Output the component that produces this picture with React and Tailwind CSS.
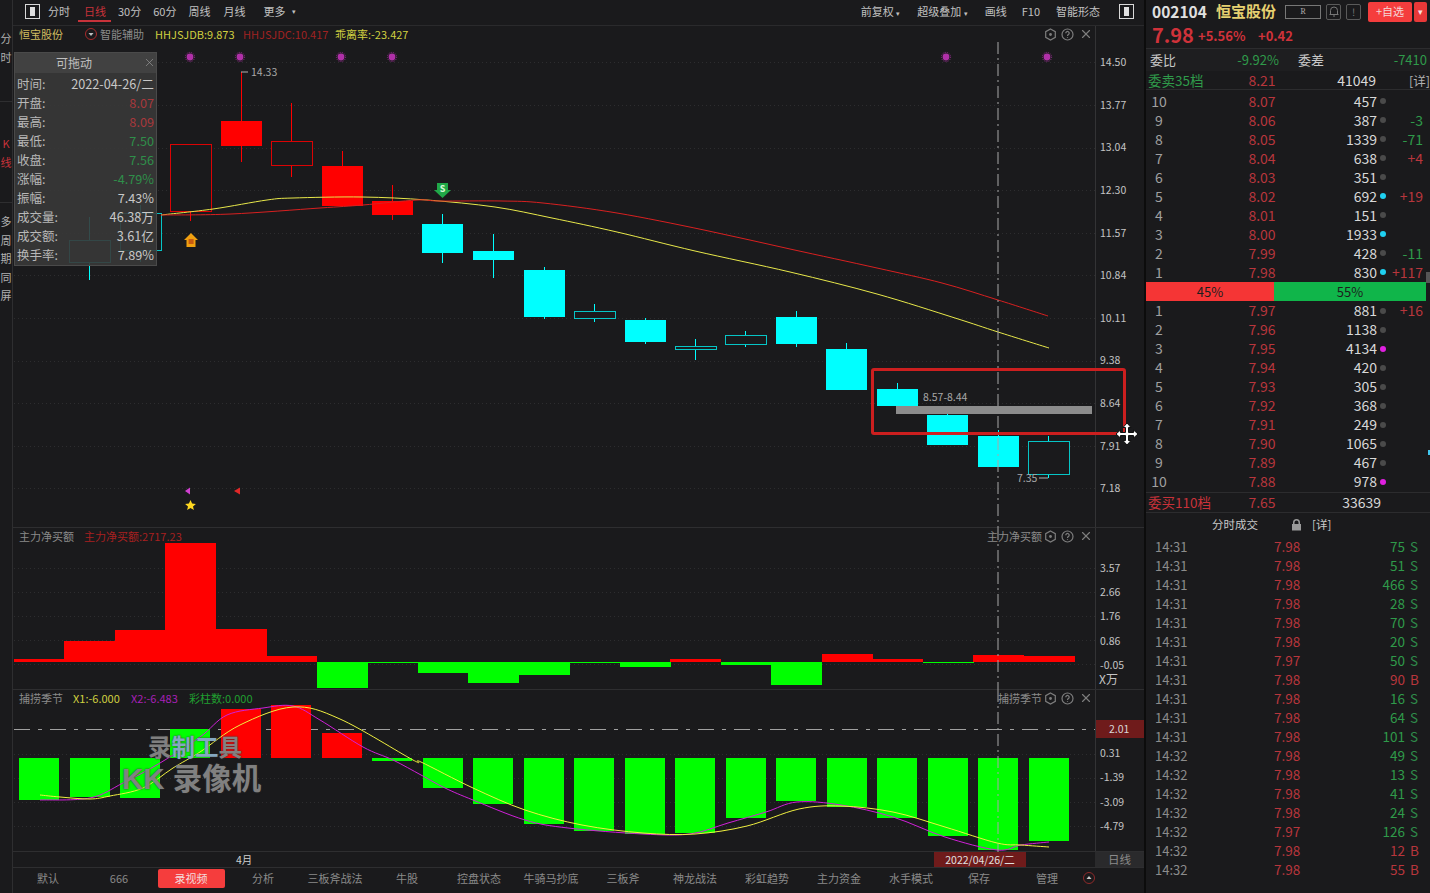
import { X } from 'lucide-react';

const RED = '#ff0000';
const CYAN = '#00ffff';
const GREEN = '#00ff00';

// x, body top, body bottom, wick top, wick bottom
const candles = [
  { x: 89, t: 240, b: 262, wt: 217, wb: 280, c: CYAN, hollow: true },
  { x: 140, t: 213, b: 250, wt: 205, wb: 262, c: CYAN, hollow: true },
  { x: 190, t: 144, b: 211, wt: 144, wb: 221, c: RED, hollow: true },
  { x: 241, t: 121, b: 146, wt: 72, wb: 162, c: RED },
  { x: 291, t: 141, b: 165, wt: 103, wb: 177, c: RED, hollow: true },
  { x: 342, t: 166, b: 206, wt: 151, wb: 206, c: RED },
  { x: 392, t: 201, b: 215, wt: 185, wb: 220, c: RED },
  { x: 442, t: 224, b: 253, wt: 214, wb: 263, c: CYAN },
  { x: 493, t: 251, b: 260, wt: 234, wb: 278, c: CYAN },
  { x: 544, t: 270, b: 317, wt: 267, wb: 319, c: CYAN },
  { x: 594, t: 311, b: 318, wt: 304, wb: 322, c: CYAN, hollow: true },
  { x: 645, t: 320, b: 342, wt: 318, wb: 344, c: CYAN },
  { x: 695, t: 346, b: 349, wt: 339, wb: 360, c: CYAN, hollow: true },
  { x: 745, t: 335, b: 344, wt: 331, wb: 347, c: CYAN, hollow: true },
  { x: 796, t: 317, b: 344, wt: 311, wb: 347, c: CYAN },
  { x: 846, t: 349, b: 390, wt: 343, wb: 390, c: CYAN },
  { x: 897, t: 389, b: 406, wt: 383, wb: 406, c: CYAN },
  { x: 947, t: 415, b: 445, wt: 408, wb: 445, c: CYAN },
  { x: 998, t: 436, b: 467, wt: 430, wb: 467, c: CYAN },
  { x: 1048, t: 441, b: 474, wt: 436, wb: 478, c: CYAN, hollow: true },
];

const yellowMain = [[161, 215], [213, 209], [267, 200], [293, 198], [362, 197], [427, 200], [495, 207], [552, 218], [617, 232], [695, 251], [790, 272], [877, 294], [955, 318], [998, 332], [1049, 348]];
const redMain = [[161, 215], [231, 214], [320, 208], [363, 205], [417, 200], [439, 201], [502, 201], [543, 203], [617, 213], [704, 230], [790, 249], [877, 268], [942, 283], [998, 300], [1048, 316]];

const netBars = [
  [14, 659, 662, RED], [64, 641, 662, RED], [115, 630, 662, RED], [165, 543, 662, RED], [216, 629, 662, RED],
  [266, 656, 662, RED], [317, 662, 688, GREEN], [367, 662, 663, GREEN], [418, 662, 673, GREEN], [468, 662, 683, GREEN],
  [519, 662, 675, GREEN], [569, 662, 663, GREEN], [620, 662, 667, GREEN], [670, 659, 662, RED], [721, 662, 665, GREEN],
  [771, 662, 685, GREEN], [822, 654, 662, RED], [872, 659, 662, RED], [923, 662, 663, GREEN], [973, 655, 662, RED],
  [1024, 656, 662, RED],
];

const colorBars = [
  [19, 758, 800, GREEN], [70, 758, 797, GREEN], [120, 758, 798, GREEN], [170, 729, 758, GREEN], [221, 709, 758, RED],
  [271, 705, 758, RED], [322, 733, 758, RED], [372, 758, 761, GREEN], [423, 758, 788, GREEN], [473, 758, 804, GREEN],
  [524, 758, 824, GREEN], [574, 758, 831, GREEN], [625, 758, 834, GREEN], [675, 758, 833, GREEN], [726, 758, 818, GREEN],
  [776, 758, 801, GREEN], [827, 758, 807, GREEN], [877, 758, 818, GREEN], [928, 758, 836, GREEN], [978, 758, 850, GREEN],
  [1029, 758, 841, GREEN],
];

const yellowLow = [[40, 795], [60, 797], [90, 799], [110, 796], [143, 788], [173, 768], [200, 752], [240, 725], [293, 707], [340, 719], [413, 760], [421, 762], [473, 788], [525, 810], [582, 825], [643, 833], [695, 834], [747, 826], [799, 809], [841, 806], [893, 812], [945, 827], [997, 843], [1021, 845], [1049, 847]];
const magentaLow = [[40, 800], [90, 798], [123, 783], [160, 763], [200, 737], [227, 715], [263, 708], [293, 706], [320, 720], [363, 747], [393, 760], [421, 775], [445, 788], [473, 800], [525, 820], [568, 828], [643, 834], [690, 834], [728, 823], [766, 812], [797, 802], [841, 805], [893, 817], [945, 837], [997, 850], [1021, 845], [1049, 842]];

const asks = [
  ['10', '8.07', '457', 'g', ''], ['9', '8.06', '387', 'g', '-3'], ['8', '8.05', '1339', 'g', '-71'],
  ['7', '8.04', '638', 'g', '+4'], ['6', '8.03', '351', 'g', ''], ['5', '8.02', '692', 'c', '+19'],
  ['4', '8.01', '151', 'g', ''], ['3', '8.00', '1933', 'c', ''], ['2', '7.99', '428', 'g', '-11'],
  ['1', '7.98', '830', 'c', '+117'],
];
const bids = [
  ['1', '7.97', '881', 'g', '+16'], ['2', '7.96', '1138', 'g', ''], ['3', '7.95', '4134', 'm', ''],
  ['4', '7.94', '420', 'g', ''], ['5', '7.93', '305', 'g', ''], ['6', '7.92', '368', 'g', ''],
  ['7', '7.91', '249', 'g', ''], ['8', '7.90', '1065', 'g', ''], ['9', '7.89', '467', 'g', ''],
  ['10', '7.88', '978', 'm', ''],
];
const ticks = [
  ['14:31', '7.98', '75', 'S'], ['14:31', '7.98', '51', 'S'], ['14:31', '7.98', '466', 'S'], ['14:31', '7.98', '28', 'S'],
  ['14:31', '7.98', '70', 'S'], ['14:31', '7.98', '20', 'S'], ['14:31', '7.97', '50', 'S'], ['14:31', '7.98', '90', 'B'],
  ['14:31', '7.98', '16', 'S'], ['14:31', '7.98', '64', 'S'], ['14:31', '7.98', '101', 'S'], ['14:32', '7.98', '49', 'S'],
  ['14:32', '7.98', '13', 'S'], ['14:32', '7.98', '41', 'S'], ['14:32', '7.98', '24', 'S'], ['14:32', '7.97', '126', 'S'],
  ['14:32', '7.98', '12', 'B'], ['14:32', '7.98', '55', 'B'],
];

const popupRows = [
  ['时间:', '2022-04-26/二', 'text-[#c8c8c8]'], ['开盘:', '8.07', 'text-[#a8383c]'], ['最高:', '8.09', 'text-[#a8383c]'],
  ['最低:', '7.50', 'text-[#2f8f4a]'], ['收盘:', '7.56', 'text-[#2f8f4a]'], ['涨幅:', '-4.79%', 'text-[#2f8f4a]'],
  ['振幅:', '7.43%', 'text-[#c8c8c8]'], ['成交量:', '46.38万', 'text-[#c8c8c8]'], ['成交额:', '3.61亿', 'text-[#c8c8c8]'],
  ['换手率:', '7.89%', 'text-[#c8c8c8]'],
];

const tabs = ['默认', '666', '录视频', '分析', '三板斧战法', '牛股', '控盘状态', '牛骑马抄底', '三板斧', '神龙战法', '彩虹趋势', '主力资金', '水手模式'];

const dotColors = { g: 'bg-[#4a4a4a]', c: 'bg-[#1fd0f0]', m: 'bg-[#e020e0]' };

// catmull-rom through the sampled points, so the averages don't look kinked
function smoothPath(pts) {
  let d = `M${pts[0][0]} ${pts[0][1]}`;
  for (let i = 0; i < pts.length - 1; i++) {
    const p0 = pts[i - 1] || pts[i];
    const p1 = pts[i];
    const p2 = pts[i + 1];
    const p3 = pts[i + 2] || p2;
    const c1x = p1[0] + (p2[0] - p0[0]) / 6;
    const c1y = p1[1] + (p2[1] - p0[1]) / 6;
    const c2x = p2[0] - (p3[0] - p1[0]) / 6;
    const c2y = p2[1] - (p3[1] - p1[1]) / 6;
    d += `C${c1x} ${c1y} ${c2x} ${c2y} ${p2[0]} ${p2[1]}`;
  }
  return d;
}

function SplitIcon() {
  return (
    <div className="w-[15px] h-[15px] border border-[#d8d8d8] flex justify-center items-stretch py-[2px]">
      <div className="w-[5px] bg-[#e0e0e0]" />
    </div>
  );
}

function PanelIcons() {
  return (
    <div className="flex items-center gap-[4px] text-[#7d7d7d]">
      <svg width="13" height="13" viewBox="0 0 13 13" fill="none" stroke="currentColor" strokeWidth="1.2">
        <path d="M6.5 1 11.3 3.7v5.6L6.5 12 1.7 9.3V3.7z" />
        <circle cx="6.5" cy="6.5" r="1.4" fill="currentColor" stroke="none" />
      </svg>
      <svg width="13" height="13" viewBox="0 0 13 13" fill="none" stroke="currentColor" strokeWidth="1.2">
        <circle cx="6.5" cy="6.5" r="5.5" />
        <path d="M4.8 5.2a1.7 1.7 0 1 1 2.6 1.4c-.6.4-.9.7-.9 1.3M6.5 9.2v.8" />
      </svg>
      <X size={14} strokeWidth={2} className="ml-[1px]" />
    </div>
  );
}

function PanelHeader({ children, right }) {
  return (
    <div className="absolute left-0 top-0 w-[1082px] h-[16px] pl-[6px] pr-[2px] flex items-center text-[11px] leading-[16px] whitespace-nowrap">
      {children}
      <div className="ml-auto flex items-center gap-[2px]">
        {right && <span className="text-[#8a8a8a] text-[11px]">{right}</span>}
        <PanelIcons />
      </div>
    </div>
  );
}

function AxisLabel({ children, className = 'h-[24.2px]' }) {
  return <div className={`pl-[4px] flex items-center text-[10.5px] text-[#c4c4c4] ${className}`}>{children}</div>;
}

function Grid({ ys, x2 = 1095 }) {
  return ys.map((y) => <line key={y} x1="14" x2={x2} y1={y + 0.5} y2={y + 0.5} stroke="#2d2d2f" strokeDasharray="1 3" />);
}

function Bars({ data, width }) {
  return data.map(([x, t, b, c]) => <rect key={x} x={x} y={t} width={width} height={b - t} fill={c} shapeRendering="crispEdges" />);
}

function CrossLine({ y1, y2 }) {
  return <line x1="998" x2="998" y1={y1} y2={y2} stroke="#a8a8a8" strokeDasharray="12 4 2 4" />;
}

function MainChart() {
  const gridYs = [62, 105, 148, 190, 233, 275, 318, 361, 403, 446, 488];
  return (
    <svg viewBox="13 26 1082 502" className="w-[1082px] h-[502px] block shrink-0">
      <Grid ys={gridYs} />
      {candles.map((k) => (
        <g key={k.x} shapeRendering="crispEdges">
          <line x1={k.x + 0.5} x2={k.x + 0.5} y1={k.wt} y2={k.t} stroke={k.c} />
          <line x1={k.x + 0.5} x2={k.x + 0.5} y1={k.b} y2={k.wb} stroke={k.c} />
          {k.hollow ? (
            <rect x={k.x - 20 + 0.5} y={k.t + 0.5} width="41" height={k.b - k.t} fill="#1a1a1c" stroke={k.c} strokeOpacity={k.c === CYAN ? 0.75 : 0.85} />
          ) : (
            <rect x={k.x - 20} y={k.t} width="41" height={k.b - k.t} fill={k.c} />
          )}
        </g>
      ))}
      <path d={smoothPath(yellowMain)} fill="none" stroke="#e8e84a" />
      <path d={smoothPath(redMain)} fill="none" stroke="#d82020" />
      <CrossLine y1={42} y2={528} />
      {[190, 240, 341, 392, 946, 1047].map((x) => (
        <g key={x}>
          <circle cx={x} cy="57" r="3.4" fill="#b030a8" />
          <circle cx={x} cy="57" r="4.6" fill="none" stroke="#b030a8" strokeWidth="0.8" strokeDasharray="1 1.2" />
        </g>
      ))}
      {/* buy / sell markers */}
      <path d="M191 233l7 7h-2.5v7h-9v-7H184z" fill="#f0a010" />
      <rect x="188.6" y="239" width="5" height="5" fill="#c85a10" />
      <path d="M437 183h11v7l3 0-8.500 8-8.500-8 3 0z" fill="#20a848" />
      <text x="442.500" y="192" textAnchor="middle" fontSize="9" fontWeight="700" fill="#d8f8d8">S</text>
      <path d="M185 491l5-3.500v7z" fill="#d040d0" />
      <path d="M234 491l6-3.500v7z" fill="#e02828" />
      <path d="M190.500 500l1.600 3.500 3.800.4-2.900 2.500.9 3.700-3.400-2-3.400 2 .9-3.700-2.900-2.500 3.800-.4z" fill="#ffd820" />
      {/* price notes */}
      <path d="M241 72h7" stroke="#b0b0b0" />
      <text x="251" y="76" fontSize="10.500" fill="#a8a8a8">14.33</text>
      <text x="923" y="401" fontSize="10.500" fill="#a8a8a8">8.57-8.44</text>
      <text x="1017" y="482" fontSize="10.500" fill="#a8a8a8">7.35</text>
      <path d="M1039 478h9" stroke="#b0b0b0" />
      <rect x="896" y="406" width="196" height="8" fill="#8c8c8c" />
    </svg>
  );
}

function NetChart() {
  return (
    <svg viewBox="13 528 1082 162" className="w-[1082px] h-[162px] block shrink-0">
      <Grid ys={[568, 592, 616, 640, 664]} />
      <Bars data={netBars} width={50.500} />
      <CrossLine y1={528} y2={690} />
    </svg>
  );
}

function LowChart() {
  return (
    <svg viewBox="13 690 1082 162" className="w-[1082px] h-[162px] block shrink-0">
      <Grid ys={[754, 778, 802, 826]} />
      <line x1="14" x2="1095" y1="729.500" y2="729.500" stroke="#a0a0a0" strokeDasharray="16 8 4 8" />
      <Bars data={colorBars} width={40} />
      <path d={smoothPath(magentaLow)} fill="none" stroke="#d020d8" />
      <path d={smoothPath(yellowLow)} fill="none" stroke="#f0f040" />
      <CrossLine y1={690} y2={852} />
    </svg>
  );
}

function Popup() {
  return (
    <div className="absolute left-[1px] top-[26px] w-[143px] h-[214px] bg-[#383838]/90 border border-[#4a4a4a] text-[12.500px] text-[#b8b8b8]">
      <div className="h-[20px] relative flex items-center pl-[41px] bg-[#414141] text-[#c0c0c0] text-[12px]">
        可拖动
        <X size={13} strokeWidth={1.2} className="absolute right-0 top-[3px] text-[#9a9a9a]" />
      </div>
      <div className="px-[2px] pt-[1px]">
        {popupRows.map(([k, v, c]) => (
          <div key={k} className="h-[19px] flex items-center justify-between leading-[19px]">
            <span>{k}</span>
            <span className={`text-[12.700px] ${c}`}>{v}</span>
          </div>
        ))}
      </div>
    </div>
  );
}

function BookRow({ row }) {
  const [idx, price, vol, dot, delta] = row;
  return (
    <div className="h-[19px] flex items-center text-[14px] leading-[19px]">
      <span className="w-[26px] text-center text-[#a0a0a0]">{idx}</span>
      <span className="w-[100px] ml-[40px] text-center text-[#b8363c]">{price}</span>
      <span className="w-[65px] text-right text-[#d8d8d8]">{vol}</span>
      <span className="w-[11px] flex justify-center">
        <i className={`block w-[6px] h-[6px] rounded-full ${dotColors[dot]}`} />
      </span>
      <span className={`flex-1 text-right pr-[7px] ${delta[0] === '+' ? 'text-[#b8363c]' : 'text-[#2f9a4a]'}`}>{delta}</span>
    </div>
  );
}

function RightPanel() {
  return (
    <aside className="w-[284px] shrink-0 h-[893px] flex flex-col overflow-hidden bg-[#1a1a1c] relative">
      <div className="h-[23px] flex items-center pl-[6px] whitespace-nowrap">
        <span className="text-[15.500px] font-bold text-[#e0e0e0] w-[64px]">002104</span>
        <span className="text-[15px] font-bold text-[#e6d070] w-[69px]">恒宝股份</span>
        <span className="w-[36px] h-[14px] border border-[#777] text-[9px] flex items-center justify-center text-[#aaa] font-serif">R</span>
        <span className="ml-[5px] w-[15px] h-[16px] border border-[#5a5a5a] rounded-[2px] flex items-center justify-center">
          <svg width="10" height="11" viewBox="0 0 10 11" fill="none" stroke="#777">
            <path d="M1.500 8.500V4.500a3.500 3.500 0 0 1 7 0v4zM.5 8.500h9M4 10h2" />
          </svg>
        </span>
        <span className="ml-[5px] w-[15px] h-[16px] border border-[#5a5a5a] rounded-[2px] flex items-center justify-center text-[10px] text-[#777]">!</span>
        <span className="ml-[7px] w-[44px] h-[20px] bg-[#f53d3d] rounded-[2px] flex items-center justify-center text-[11px] text-[#f4d8d8]">+自选</span>
        <span className="ml-[2px] w-[13px] h-[20px] bg-[#e83838] rounded-[2px] flex items-center justify-center text-[9px] text-[#f8e0e0]">▾</span>
      </div>
      <div className="h-[26px] flex items-center pl-[6px] font-bold text-[#d0323a] whitespace-nowrap border-b border-[#2c2c2e]">
        <span className="text-[20px] leading-[26px] w-[46px] -mt-[1px]">7.98</span>
        <span className="text-[13px] w-[60px]">+5.56%</span>
        <span className="text-[13px]">+0.42</span>
      </div>
      <div className="h-[22px] pb-[1px] flex items-center text-[13px] leading-[21px] pl-[4px] pr-[3px] bg-[#1e1e20]">
        <span className="text-[#c8c8c8] w-[40px]">委比</span>
        <span className="text-[#2f9a4a] w-[89px] text-right">-9.92%</span>
        <span className="text-[#c8c8c8] ml-[19px]">委差</span>
        <span className="text-[#2f9a4a] ml-auto">-7410</span>
      </div>
      <div className="h-[19px] flex items-center text-[14px] leading-[19px] pl-[2px] border-b border-[#2c2c2e] whitespace-nowrap">
        <span className="text-[#2f9a4a] w-[64px] text-[13.500px]">委卖35档</span>
        <span className="text-[#b8363c] w-[100px] text-center">8.21</span>
        <span className="text-[#d8d8d8] w-[64px] text-right">41049</span>
        <span className="text-[#b0b0b0] ml-auto text-[12.500px]">[详]</span>
      </div>
      <div className="pt-[1.500px]">
        {asks.map((r) => <BookRow key={r[0]} row={r} />)}
      </div>
      <div className="h-[19px] mr-[4px] flex text-[13px] leading-[19px] text-[#1d1d1d]">
        <div className="w-[128px] bg-[#f53535] text-center">45%</div>
        <div className="flex-1 bg-[#10b54a] text-center">55%</div>
      </div>
      <div className="pt-[0.500px]">
        {bids.map((r) => <BookRow key={r[0]} row={r} />)}
      </div>
      <div className="mt-[0.500px] h-[21px] flex items-center text-[14px] leading-[21px] pl-[2px] border-y border-[#2c2c2e] whitespace-nowrap">
        <span className="text-[#c8323a] w-[64px] text-[13.500px]">委买110档</span>
        <span className="text-[#b8363c] w-[100px] text-center">7.65</span>
        <span className="text-[#d8d8d8] w-[69px] text-right">33639</span>
      </div>
      <div className="h-[24px] pt-[1px] flex items-center text-[11.500px] text-[#c8c8c8] pl-[66px] whitespace-nowrap">
        <span className="w-[79px]">分时成交</span>
        <svg width="11" height="12" viewBox="0 0 11 12" fill="#9a9a9a">
          <path d="M2 5V3.500a3.500 3.500 0 0 1 7 0V5h1v6.500H1V5zm1.500 0h4V3.500a2 2 0 0 0-4 0z" />
        </svg>
        <span className="ml-[10px]">[详]</span>
      </div>
      <div>
        {ticks.map(([t, p, v, s], i) => (
          <div key={i} className="h-[19px] flex items-center text-[13.500px] leading-[19px]">
            <span className="w-[64px] pl-[9px] text-[#8c8c8c] text-[13px]">{t}</span>
            <span className="w-[86px] ml-[50px] pl-[14px] text-[#b8363c]">{p}</span>
            <span className={`w-[59px] text-right ${s === 'S' ? 'text-[#2f9a4a]' : 'text-[#b8363c]'}`}>{v}</span>
            <span className={`ml-[5px] ${s === 'S' ? 'text-[#2f8a4a]' : 'text-[#b8363c]'}`}>{s}</span>
          </div>
        ))}
      </div>
      <span className="absolute right-0 top-[272px] w-[4px] h-[11px] bg-[#555]" />
      <span className="absolute right-0 top-[450px] w-[2px] h-[5px] bg-[#40c8f0]" />
    </aside>
  );
}

export default function App() {
  return (
    <div className="w-[1430px] h-[893px] flex overflow-hidden bg-[#1a1a1c] font-['Noto_Sans_CJK_SC','Noto_Sans',sans-serif] text-[#c8c8c8]">
      {/* left rail */}
      <div className="w-[13px] shrink-0 border-r border-[#2e2e30] pt-[29px] flex flex-col items-center text-[11px] leading-[18.500px] text-[#b0b0b0]">
        <span>分</span>
        <span>时</span>
        <div className="w-full border-t border-[#2e2e30] mt-[35px] mb-[32px]" />
        <span className="text-[#c8323a]">K</span>
        <span className="text-[#c8323a]">线</span>
        <div className="w-full border-t border-[#2e2e30] mt-[31px] mb-[9px]" />
        <span>多</span>
        <span>周</span>
        <span>期</span>
        <span>同</span>
        <span>屏</span>
      </div>

      <div className="w-[1131px] shrink-0 flex flex-col relative">
        {/* toolbar */}
        <div className="h-[26px] pb-[3px] flex items-center border-b border-[#2a2a2c] text-[11px] whitespace-nowrap text-[#c0c0c0]">
          <div className="ml-[12px]"><SplitIcon /></div>
          <span className="ml-[8px]">分时</span>
          <span className="ml-[14px] relative text-[#c8323a]">
            日线
            <i className="absolute -left-[6px] -right-[5px] top-[17px] h-[2px] bg-[#c8323a]" />
          </span>
          <span className="ml-[12px]">30分</span>
          <span className="ml-[12px]">60分</span>
          <span className="ml-[12px]">周线</span>
          <span className="ml-[13px]">月线</span>
          <span className="ml-[18px]">更多</span>
          <span className="ml-[7px] text-[7px]">▾</span>
          <span className="ml-auto">前复权 <span className="text-[7px]">▾</span></span>
          <span className="ml-[17px]">超级叠加 <span className="text-[7px]">▾</span></span>
          <span className="ml-[17px]">画线</span>
          <span className="ml-[15px]">F10</span>
          <span className="ml-[16px]">智能形态</span>
          <div className="ml-[19px] mr-[10px]"><SplitIcon /></div>
        </div>

        {/* main chart panel */}
        <section className="h-[502px] flex relative border-b border-[#2e2e30] shrink-0">
          <MainChart />
          <div className="border-l border-[#333335] pt-[14.800px] flex-1 overflow-hidden">
            {['14.50', '13.77', '13.04', '12.30', '11.57', '10.84', '10.11', '9.38', '8.64', '7.91', '7.18'].map((v) => (
              <AxisLabel key={v} className="h-[42.600px]">{v}</AxisLabel>
            ))}
          </div>
          <PanelHeader>
            <span className="text-[#d0bc60] w-[65px]">恒宝股份</span>
            <svg width="14" height="14" viewBox="0 0 14 14" fill="none" className="w-[14px]">
              <circle cx="7" cy="7" r="5.500" stroke="#a82a2a" />
              <path d="M4.500 6h5L7 9z" fill="#c0c0c0" />
            </svg>
            <span className="text-[#8a8a8a] ml-[2px] w-[55px]">智能辅助</span>
            <span className="text-[#d0d040] w-[88px]">HHJSJDB:9.873</span>
            <span className="text-[#a02222] w-[92px]">HHJSJDC:10.417</span>
            <span className="text-[#d0d040]">乖离率:-23.427</span>
          </PanelHeader>
          <Popup />
          {/* red box the recorder drew */}
          <div className="absolute left-[858px] top-[342px] w-[255px] h-[67px] border-[3px] border-[#cc1f1f] rounded-[3px]" />
          <svg width="26" height="26" viewBox="0 0 26 26" className="absolute left-[1101px] top-[395px]">
            <path d="M13 2l4 4.500h-2.500v5h5V9l4.500 4-4.500 4v-2.500h-5v5H17l-4 4.500-4-4.500h2.500v-5h-5V17L2 13l4.500-4v2.500h5v-5H9z" fill="#fff" stroke="#111" strokeWidth="1" />
          </svg>
        </section>

        {/* net buy panel */}
        <section className="h-[162px] flex relative border-b border-[#2e2e30] shrink-0">
          <NetChart />
          <div className="border-l border-[#333335] pt-[27.900px] flex-1">
            {['3.57', '2.66', '1.76', '0.86', '-0.05'].map((v) => <AxisLabel key={v}>{v}</AxisLabel>)}
            <div className="pl-[3px] text-[12px] leading-[14px] -mt-[5px] text-[#c4c4c4]">X万</div>
          </div>
          <PanelHeader right="主力净买额">
            <span className="text-[#8a8a8a] w-[65px]">主力净买额</span>
            <span className="text-[#a82020]">主力净买额:2717.23</span>
          </PanelHeader>
        </section>

        {/* lower indicator panel */}
        <section className="h-[162px] flex relative border-b border-[#2e2e30] shrink-0">
          <LowChart />
          <div className="border-l border-[#333335] pt-[30px] flex-1">
            <div className="h-[18px] bg-[#6f1b1b] text-[10.500px] flex items-center pl-[13px] text-[#d8d8d8]">2.01</div>
            <div className="pt-[3px]">
              {['0.31', '-1.39', '-3.09', '-4.79'].map((v) => <AxisLabel key={v}>{v}</AxisLabel>)}
            </div>
          </div>
          <PanelHeader right="捕捞季节">
            <span className="text-[#8a8a8a] w-[54px]">捕捞季节</span>
            <span className="text-[#d0d040] w-[58px]">X1:-6.000</span>
            <span className="text-[#a820b8] w-[58px]">X2:-6.483</span>
            <span className="text-[#20a030]">彩柱数:0.000</span>
          </PanelHeader>
          {/* recorder watermark */}
          <div className="absolute left-[109px] top-[44px] font-bold font-['Liberation_Sans','Noto_Sans_CJK_SC',sans-serif] text-[#8c8c8c]/90 whitespace-nowrap [text-shadow:0_0_2px_#333]">
            <div className="ml-[26px] text-[23.500px] leading-[28px]">
              录<span className="text-[#84a8c0]">制工</span>具
            </div>
            <div className="text-[29.500px] leading-[36px] -mt-[1px]">KK 录像机</div>
          </div>
        </section>

        {/* date axis */}
        <div className="h-[16px] flex border-b border-[#2e2e30] shrink-0 text-[10.500px] leading-[15px]">
          <div className="w-[1082px] relative flex">
            <span className="ml-[223px] text-[#d0d0d0]">4月</span>
            <span className="absolute left-[921px] top-0 w-[92px] h-[15px] bg-[#6f1b1b] text-center text-[#e0e0e0]">2022/04/26/二</span>
          </div>
          <div className="flex-1 bg-[#2a2a2c] text-center text-[#8a8a8a] text-[11.500px]">日线</div>
        </div>

        {/* bottom tabs */}
        <div className="flex-1 pb-[5px] flex items-center text-[11px] text-[#8a8a8a] whitespace-nowrap">
          {tabs.map((t, i) => (
            <div key={t} className={`h-[20px] flex items-center justify-center ${i === 0 ? 'w-[70px]' : 'w-[72px]'}`}>
              {t === '录视频' ? (
                <span className="w-[67px] h-[19px] bg-[#f53d3d] rounded-[2px] flex items-center justify-center text-[#f4dcdc]">{t}</span>
              ) : t}
            </div>
          ))}
          <span className="w-[68px] ml-[21px]">保存</span>
          <span>管理</span>
          <svg width="14" height="14" viewBox="0 0 14 14" fill="none" className="ml-[24px]">
            <circle cx="7" cy="7" r="5.500" stroke="#8e2a2a" />
            <path d="M4.500 8h5L7 5z" fill="#c8c8c8" />
          </svg>
        </div>
      </div>

      <div className="w-[2px] shrink-0 bg-[#0c0c0c]" />
      <RightPanel />
    </div>
  );
}
